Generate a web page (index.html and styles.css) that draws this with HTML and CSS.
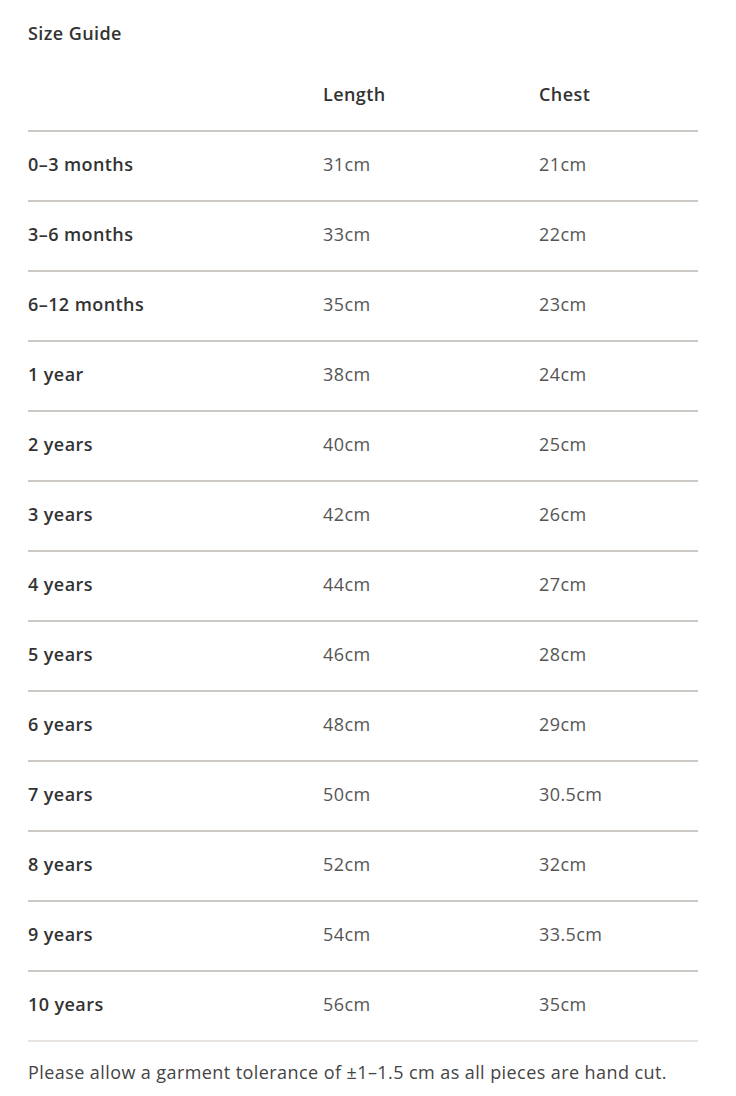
FILE: index.html
```html
<!DOCTYPE html>
<html lang="en">
<head>
<meta charset="utf-8">
<title>Size Guide</title>
<link rel="stylesheet" href="styles.css">
</head>
<body>
<main class="guide">
  <h2 class="title">Size Guide</h2>
  <div class="table">
    <div class="row head"><span></span><span>Length</span><span>Chest</span></div>
    <div class="row"><span class="label">0–3 months</span><span>31cm</span><span>21cm</span></div>
    <div class="row"><span class="label">3–6 months</span><span>33cm</span><span>22cm</span></div>
    <div class="row"><span class="label">6–12 months</span><span>35cm</span><span>23cm</span></div>
    <div class="row"><span class="label">1 year</span><span>38cm</span><span>24cm</span></div>
    <div class="row"><span class="label">2 years</span><span>40cm</span><span>25cm</span></div>
    <div class="row"><span class="label">3 years</span><span>42cm</span><span>26cm</span></div>
    <div class="row"><span class="label">4 years</span><span>44cm</span><span>27cm</span></div>
    <div class="row"><span class="label">5 years</span><span>46cm</span><span>28cm</span></div>
    <div class="row"><span class="label">6 years</span><span>48cm</span><span>29cm</span></div>
    <div class="row"><span class="label">7 years</span><span>50cm</span><span>30.5cm</span></div>
    <div class="row"><span class="label">8 years</span><span>52cm</span><span>32cm</span></div>
    <div class="row"><span class="label">9 years</span><span>54cm</span><span>33.5cm</span></div>
    <div class="row last"><span class="label">10 years</span><span>56cm</span><span>35cm</span></div>
  </div>
  <p class="note">Please allow a garment tolerance of ±1–1.5 cm as all pieces are hand cut.</p>
</main>
</body>
</html>
```

FILE: styles.css
```css
html, body {
  margin: 0;
  padding: 0;
  background: #ffffff;
}

body {
  font-family: "Open Sans", sans-serif;
  color: #333333;
  font-size: 18px;
  letter-spacing: 0.42px;
}

.guide {
  padding: 22px 38px 0 28px;
}

.title {
  margin: 0;
  font-size: 18px;
  line-height: 22px;
  font-weight: 600;
  color: #333333;
}

.table {
  margin-top: 39px;
}

.row {
  display: grid;
  grid-template-columns: 295px 216px 1fr;
  align-items: center;
  height: 68px;
  border-bottom: 2px solid #ccc8c4;
  font-size: 18px;
  line-height: 22px;
  color: #555555;
}

.row span {
  padding-bottom: 5px;
}

.row.head {
  height: auto;
  padding-bottom: 20px;
  font-weight: 600;
  color: #333333;
}

.row.last {
  border-bottom-color: #e6e3e0;
}

.label {
  font-weight: 600;
  color: #333333;
}

.note {
  margin: 19px 0 0;
  font-size: 18px;
  line-height: 22px;
  color: #444444;
}
```
